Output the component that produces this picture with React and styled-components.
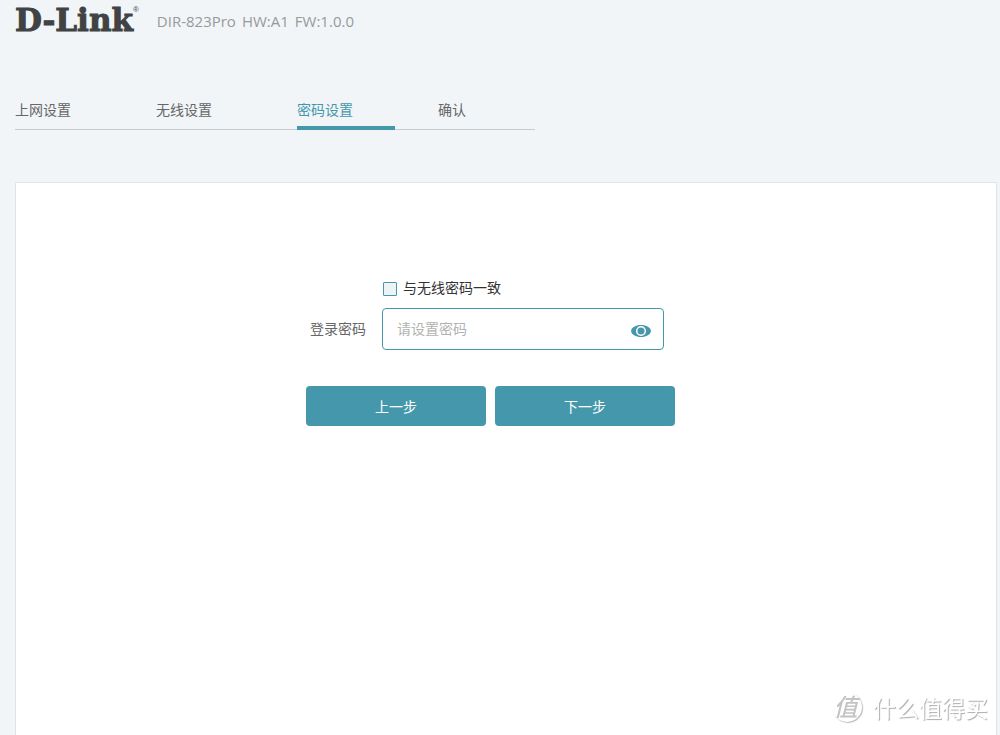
import React, { useState } from 'react';
import styled, { createGlobalStyle } from 'styled-components';

const steps = ['上网设置', '无线设置', '密码设置', '确认'];

export default function App() {
    const [step, setStep] = useState(2);
    const [same, setSame] = useState(false);
    const [password, setPassword] = useState('');
    const [visible, setVisible] = useState(false);

    return (
        <Page>
            <GlobalStyle />
            <Header>
                <Logo href="#home">D-Link<Mark>®</Mark></Logo>
                <Info>
                    <span>DIR-823Pro</span>
                    <span>HW:A1</span>
                    <span>FW:1.0.0</span>
                </Info>
            </Header>
            <Steps>
                {steps.map((name, i) => (
                    <Step key={name} href="#step" $active={i === step} onClick={() => setStep(i)}>
                        {name}
                    </Step>
                ))}
            </Steps>
            <Panel>
                <Form onSubmit={e => e.preventDefault()}>
                    <CheckRow>
                        <Checkbox id="same" type="checkbox" checked={same} onChange={e => setSame(e.target.checked)} />
                        <label htmlFor="same">与无线密码一致</label>
                    </CheckRow>
                    <Field>
                        <Label htmlFor="password">登录密码</Label>
                        <InputBox>
                            <Input
                                id="password"
                                type={visible ? 'text' : 'password'}
                                placeholder="请设置密码"
                                value={password}
                                onChange={e => setPassword(e.target.value)}
                            />
                            <EyeButton type="button" aria-label="显示密码" onClick={() => setVisible(!visible)}>
                                <Eye />
                            </EyeButton>
                        </InputBox>
                    </Field>
                    <Buttons>
                        <Button type="button">上一步</Button>
                        <Button type="submit">下一步</Button>
                    </Buttons>
                </Form>
            </Panel>
            <Watermark>
                <Seal>值</Seal>
                什么值得买
            </Watermark>
        </Page>
    );
}

const Eye = () => (
    <svg width="20" height="12" viewBox="0 0 20 12" aria-hidden="true">
        <path d="M0 6C0.500 2.500 4.500 0 10 0s9.500 2.500 10 6c-.5 3.500-4.500 6-10 6S.5 9.500 0 6z" fill="#4598ab" />
        <circle cx="10" cy="6" r="4.300" fill="#4598ab" stroke="#fff" strokeWidth="1.500" />
    </svg>
);

const GlobalStyle = createGlobalStyle`
* {
    box-sizing: border-box;
}
body {
    margin: 0;
    background: #f1f5f8;
    color: #666;
    font: 14px/20px "Open Sans", "Noto Sans CJK SC", sans-serif;
}
`

const Page = styled.div`
display: flex;
flex-direction: column;
min-height: 100vh;
padding: 0 3px 0 15px;
`

const Header = styled.header`
display: flex;
align-items: center;
gap: 18px;
height: 40px;
`

const Logo = styled.a`
display: flex;
color: #404244;
font: bold 31px/40px "DejaVu Serif", serif;
-webkit-text-stroke: 1px #404244;
text-decoration: none;
`

const Mark = styled.sup`
font: 8px/20px "Liberation Sans", sans-serif;
-webkit-text-stroke: 0;
`

const Info = styled.div`
display: flex;
gap: 6px;
padding-top: 2px;
color: #999;
font-size: 15px;
`

const Steps = styled.nav`
display: grid;
grid-template-columns: 98px 98px 98px 1fr;
column-gap: 43px;
width: 100%;
max-width: 520px;
margin-top: 60px;
border-bottom: 1px solid #c5cbd0;
`

const Step = styled.a`
height: 30px;
margin-bottom: -1px;
border-bottom: 4px solid ${props => (props.$active ? '#4598ab' : 'transparent')};
color: ${props => (props.$active ? '#4598ab' : '#666')};
text-decoration: none;
`

const Panel = styled.main`
flex: 1;
margin-top: 52px;
padding: 95px 16px 40px;
border: 1px solid #dee3e8;
border-bottom: 0;
border-radius: 2px 2px 0 0;
background: #fff;
`

const Form = styled.form`
width: 100%;
max-width: 400px;
margin: 0 auto;
`

const CheckRow = styled.div`
display: flex;
align-items: center;
gap: 6px;
padding-left: 77px;
color: #333;
`

const Checkbox = styled.input`
appearance: none;
width: 14px;
height: 14px;
margin: 2px 0 0;
border: 1px solid #4598ab;
border-radius: 1px;
background: #ecf3f5;
&:checked {
    background: #4598ab;
}
`

const Field = styled.div`
display: flex;
align-items: center;
margin-top: 10px;
`

const Label = styled.label`
width: 76px;
padding-left: 4px;
`

const InputBox = styled.div`
display: flex;
align-items: center;
width: 282px;
height: 42px;
border: 1px solid #4598ab;
border-radius: 4px;
background: #fff;
`

const Input = styled.input`
flex: 1;
min-width: 0;
padding: 0 0 0 14px;
border: 0;
outline: 0;
background: none;
color: #333;
font: inherit;
&::placeholder {
    color: #b2b2b2;
}
`

const EyeButton = styled.button`
display: flex;
padding: 4px 12px 0;
border: 0;
background: none;
cursor: pointer;
`

const Buttons = styled.div`
display: flex;
gap: 9px;
margin-top: 36px;
`

const Button = styled.button`
width: 180px;
height: 40px;
padding: 2px 0 0;
border: 0;
border-radius: 4px;
background: #4598ab;
color: #fff;
font: inherit;
cursor: pointer;
`

const Watermark = styled.div`
position: fixed;
right: 12px;
bottom: 12px;
display: flex;
align-items: center;
gap: 11px;
color: #fff;
font: 23px/32px "Noto Sans CJK SC", sans-serif;
text-shadow: 1px 1px 1px #aaa;
pointer-events: none;
`

const Seal = styled.span`
width: 30px;
height: 30px;
padding-right: 3px;
border-radius: 50%;
box-shadow: 1px 1px 1px #bbb;
color: #c4c4c4;
font-size: 24px;
font-style: italic;
font-weight: 500;
line-height: 28px;
text-align: center;
text-shadow: none;
`
